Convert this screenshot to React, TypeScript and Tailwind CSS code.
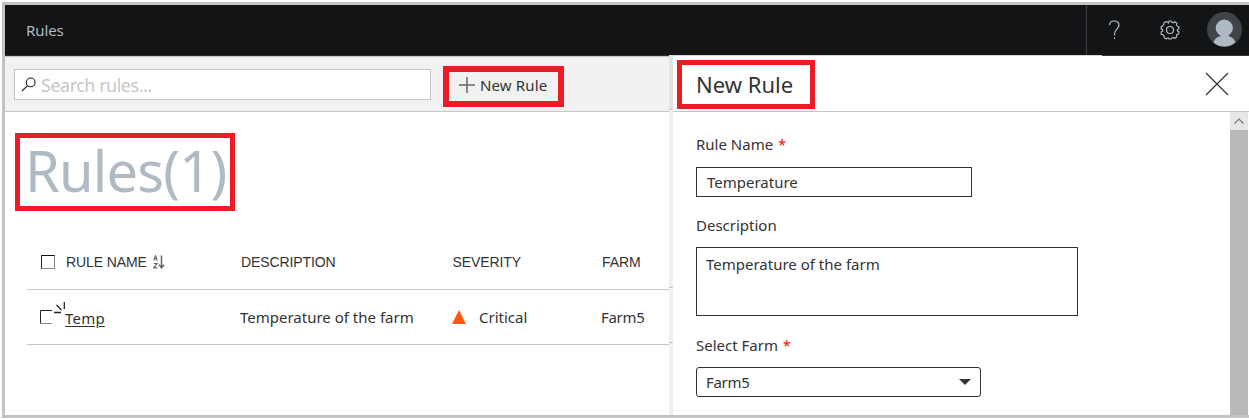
import type { ReactNode } from "react";

const SANS = "font-['Noto_Sans',sans-serif]";

function SearchIcon() {
  return (
    <svg width="16" height="16" viewBox="0 0 16 16" fill="none" stroke="#222" strokeWidth="1.1">
      <circle cx="9.7" cy="5.4" r="4.4" />
      <path d="M6.600 8.600 L1 14" />
    </svg>
  );
}

function GearIcon() {
  return (
    <svg width="20" height="20" viewBox="0 0 20 20" fill="none" stroke="#b4bec8" strokeWidth="1.2" strokeLinejoin="round">
      <path d="M8.300 3.200Q8 1.500 6.300 1.500L4 2.800Q4.200 4.600 3.200 5.400 2.500 6 1.200 6.500v2.700q1.700.2 1.700 1.300t-1.700 1.400v2.400q1.800.2 2.400 1t.5 2.200l2.200 1.400q1.300-1.200 2.200-.8T9 19h2.300q.3-1.300 1.200-1.500t2.100 1l2.200-1.700q-.6-1.300 0-2.100t2-.7v-2.400q-1.600-.3-1.600-1.300t1.600-1.300V6.500q-1.500-.2-2.100-1t.2-2.300l-2.300-1.500Q13.200 2.900 12.400 2.700T11.300 1H9.200z" />
      <circle cx="10" cy="10" r="3.500" />
    </svg>
  );
}

function Avatar() {
  return (
    <svg width="36" height="36" viewBox="0 0 36 36">
      <circle cx="17.5" cy="17.500" r="17.500" fill="#404347" />
      <ellipse cx="17.300" cy="16" rx="8.600" ry="8.600" fill="#afbac5" />
      <path d="M6.500 30.500c.8-3.300 3.300-5.700 7.200-6.500v-3h7.600v3c3.900.8 6.300 3.200 7 6.500-3 2.700-6.600 3.900-11 3.900s-7.900-1.200-10.800-3.900z" fill="#afbac5" />
    </svg>
  );
}

function SortIcon() {
  return (
    <svg width="12" height="14" viewBox="0 0 12 14" fill="none" stroke="#666" strokeWidth="1.200">
      <path d="M.7 5.500 2.500 .7 4.300 5.500M1.300 4h2.500M.8 8.500h3.200L.8 12.800h3.400" />
      <path d="M8.500 .5v12M6 9.800l2.500 3L11 9.800" strokeWidth="1.500" />
    </svg>
  );
}

function Label({ children, required }: { children: ReactNode; required?: boolean }) {
  return (
    <label className="flex h-5 items-center gap-[5px] text-[15px] whitespace-nowrap text-[#333]">
      {children}
      {required && <span className="text-[14px] text-[#f00]">*</span>}
    </label>
  );
}

function Toolbar() {
  return (
    <div className="flex h-[55px] shrink-0 items-start border-b border-[#c6c6c6] bg-[#f1f1f1] pl-[9px]">
      <div className="mt-3 flex h-[31px] w-[417px] items-center gap-1 border border-[#c6c6c6] bg-white pl-1.5">
        <SearchIcon />
        <span className="pt-0.5 text-[18px] tracking-[-0.5px] text-[#c6c6c6]">Search rules...</span>
      </div>
      <button className="mt-[9px] ml-3 flex h-[41px] w-[121px] items-center gap-[5px] border-6 border-[#ed1c24] pb-[3px] pl-[10px] text-[15px] whitespace-nowrap text-[#333]">
        <svg width="16" height="16" viewBox="0 0 16 16" stroke="#666" strokeWidth="1.500">
          <path d="M8 0v16M0 8h16" />
        </svg>
        <span className="tracking-[0.15px]">New Rule</span>
      </button>
    </div>
  );
}

function RulesTable() {
  return (
    <div className="ml-[22px] text-[15px] text-[#333]">
      <div className="flex h-[55px] items-center border-b border-[#c6c6c6] font-['Liberation_Sans',sans-serif] text-[14px] tracking-[-0.1px]">
        <div className="flex w-[214px] items-center pl-[14px]">
          <span className="size-[14px] border border-t-[#111] border-r-[#888] border-b-[#888] border-l-[#222]" />
          <span className="ml-[11px]">RULE NAME</span>
          <span className="ml-[6px]"><SortIcon /></span>
        </div>
        <div className="w-[211.500px]">DESCRIPTION</div>
        <div className="w-[149.500px]">SEVERITY</div>
        <div>FARM</div>
      </div>
      <div className="flex h-[55px] items-center border-b border-[#c6c6c6]">
        <div className="flex w-[213px] items-center pl-[13px]">
          <svg width="25" height="24" viewBox="0 0 25 24" fill="none" stroke="#222" className="-mt-2.5">
            <path d="M12 10.500H.5v13" />
            <path d="M1 23.500h11" stroke="#888" />
            <path d="M14 12.500h7M16.500 5l5 5M24.300 2v7" strokeWidth="1.300" />
          </svg>
          <a className="mt-0.5 tracking-[0.2px] underline underline-offset-2">Temp</a>
        </div>
        <div className="w-[212px]">Temperature of the farm</div>
        <div className="flex w-[149px] items-center gap-[13px]">
          <svg width="14" height="14" viewBox="0 0 14 14"><path d="M7 0l7 14H0z" fill="#ff560d" /></svg>
          Critical
        </div>
        <div className="tracking-[-0.3px]">Farm5</div>
      </div>
    </div>
  );
}

function NewRulePanel() {
  return (
    <aside className="flex min-w-0 flex-1 flex-col bg-white">
      <div className="flex h-14 shrink-0 items-start justify-between border-b border-[#c6c6c6] pr-5 pl-1">
        <h2 className="mt-1 flex h-[49px] w-[138px] items-center border-5 border-[#ed1c24] pl-[14px] text-[22px] whitespace-nowrap text-[#333]">
          New Rule
        </h2>
        <svg width="24" height="24" viewBox="0 0 24 24" stroke="#333" strokeWidth="1.200" className="mt-4">
          <path d="M1 1l22 22M23 1L1 23" />
        </svg>
      </div>
      <div className="flex min-h-0 flex-1">
        <form className="flex-1 pt-[22px] pl-[23px]">
          <Label required>Rule Name</Label>
          <div className="mt-[13px] flex h-[30px] w-[276px] items-center border border-[#333] pl-[10px] text-[15px] text-[#333]">Temperature</div>
          <div className="mt-[18px]"><Label>Description</Label></div>
          <div className="mt-3 h-[69px] w-[382px] border border-[#333] pt-[6px] pl-[9px] text-[15px] leading-5 text-[#333]">Temperature of the farm</div>
          <div className="mt-[19px]"><Label required>Select Farm</Label></div>
          <div className="mt-3 flex h-[30px] w-[285px] items-center justify-between rounded-[3px] border border-[#333] pr-[9px] pl-[9px] text-[15px] text-[#333]">
            <span className="tracking-[-0.3px]">Farm5</span>
            <svg width="12" height="6" viewBox="0 0 12 6"><path d="M0 0h12L6 6z" fill="#333" /></svg>
          </div>
        </form>
        <div className="mr-px flex w-[18px] flex-col bg-[#b9b9b9]">
          <div className="flex h-[18px] items-center justify-center bg-[#e6e6e6]">
            <svg width="10" height="6" viewBox="0 0 10 6" fill="none" stroke="#777" strokeWidth="1.200"><path d="M.5 5.500L5 1l4.500 4.500" /></svg>
          </div>
        </div>
      </div>
    </aside>
  );
}

export default function App() {
  return (
    <div className={`h-[419px] w-[1249px] overflow-hidden bg-white pt-0.5 pl-0.5 ${SANS}`}>
      <div className="flex h-[416px] flex-col border-y-3 border-l-3 border-[#c3c3c3]">
        <header className="flex h-[50px] shrink-0 items-center bg-[#131416] pl-[21px] text-[15px] text-[#afbac5]">
          <span className="flex-1 tracking-[-0.1px]">Rules</span>
          <div className="flex h-full w-[163px] items-center border-l border-[#3c3d40] pl-[21px]">
            <svg width="13" height="20" viewBox="0 0 13 20" fill="none" stroke="#b4bec8" strokeWidth="1.200">
              <path d="M1.500 5C1.700 2.500 3.500 1 6 1c3 0 5 1.500 5 4.300 0 3.700-4.500 4.200-4.500 8.700v1.500M6.500 17.500V19" />
            </svg>
            <span className="ml-[39px]"><GearIcon /></span>
            <span className="ml-[27px]"><Avatar /></span>
          </div>
        </header>
        <div className="flex min-h-0 flex-1">
          <main className="flex w-[664px] shrink-0 flex-col border-t border-[#2a2a2c]">
            <div className="h-px shrink-0 bg-[#c6c6c6]" />
            <Toolbar />
            <h1 className="mt-[21px] ml-[10px] flex h-[78px] w-[220px] shrink-0 items-center border-5 border-[#ed1c24] pb-[5px] pl-[5px] text-[56px] leading-none tracking-[-0.8px] whitespace-nowrap text-[#afbac5]">
              Rules(1)
            </h1>
            <div className="mt-6"><RulesTable /></div>
          </main>
          <div className="flex w-1 shrink-0 flex-col bg-[#efefef]">
            <div className="h-[55px] border-b border-[#c6c6c6] bg-[#e2e2e2]" />
            <div className="h-[178px] border-b border-[#c6c6c6]" />
            <div className="h-[55px] border-b border-[#c6c6c6]" />
          </div>
          <div className="flex min-w-0 flex-1 flex-col">
            <div className="flex h-px shrink-0">
              <div className="w-[429px] bg-[#d8d8d8]" />
              <div className="flex-1 bg-[#333]" />
            </div>
            <NewRulePanel />
          </div>
        </div>
      </div>
    </div>
  );
}
